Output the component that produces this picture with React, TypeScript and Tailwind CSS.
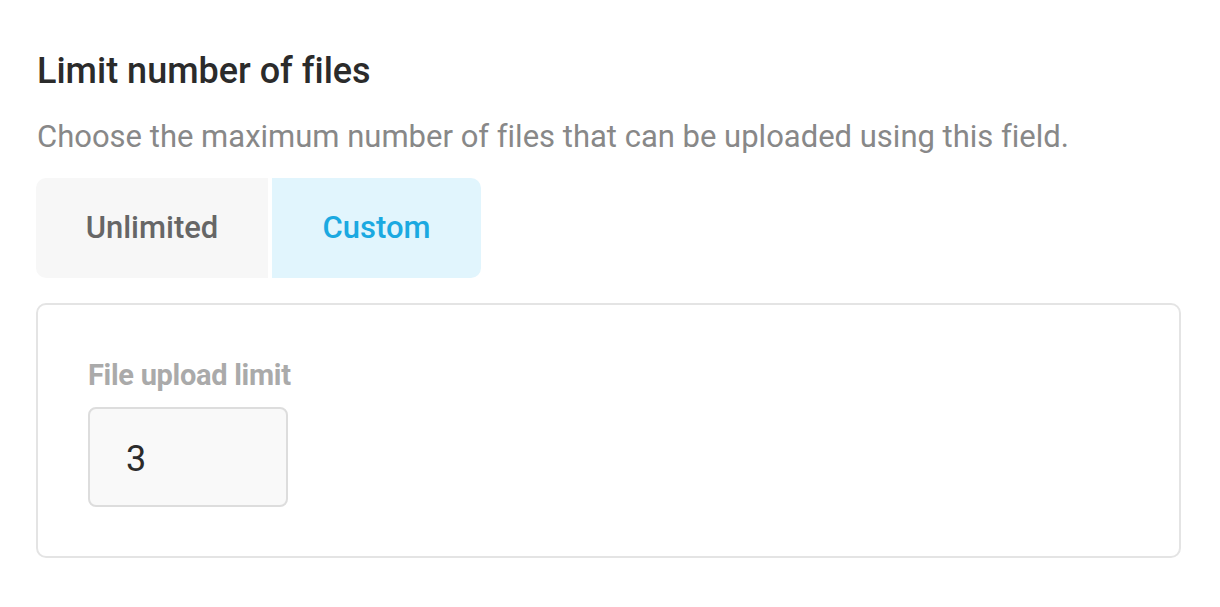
import { useState } from 'react'

const App = () => {
  const [mode, setMode] = useState<'unlimited' | 'custom'>('custom')
  const [limit, setLimit] = useState('3')

  return (
    <div className="min-h-screen bg-white pt-[49px] px-[36px] font-['Roboto','Liberation_Sans',sans-serif] [font-variant-ligatures:none]">
      <h2 className="text-[36px] leading-[44px] font-medium text-[#2b2b2b] pl-px">Limit number of files</h2>
      <p className="mt-[24px] text-[31px] leading-[40px] text-[#888888] pl-px">
        Choose the maximum number of files that can be uploaded using this field.
      </p>

      {/* segmented control */}
      <div className="mt-[21px] flex gap-[4px] w-[445px] h-[100px] rounded-[10px] overflow-hidden">
        <button
          onClick={() => setMode('unlimited')}
          className={`w-[232px] text-[31px] font-medium ${
            mode === 'unlimited' ? 'bg-[#e1f5fd] text-[#1ba9e1]' : 'bg-[#f7f7f7] text-[#666666]'
          }`}
        >
          Unlimited
        </button>
        <button
          onClick={() => setMode('custom')}
          className={`flex-1 text-[31px] font-medium ${
            mode === 'custom' ? 'bg-[#e1f5fd] text-[#1ba9e1]' : 'bg-[#f7f7f7] text-[#666666]'
          }`}
        >
          Custom
        </button>
      </div>

      {/* custom limit */}
      <div className="mt-[25px] w-[1145px] h-[255px] border-2 border-[#e4e4e4] rounded-[10px] px-[50px] pt-[53px]">
        <label className="block text-[29px] leading-[34px] font-bold text-[#aaaaaa] tracking-[-0.3px]">File upload limit</label>
        <input
          value={limit}
          onChange={(e) => setLimit(e.target.value)}
          className="mt-[15px] w-[200px] h-[100px] bg-[#f9f9f9] border-2 border-[#dddddd] rounded-[8px] pl-[36px] pt-[4px] text-[36px] text-[#2b2b2b] focus:outline-none"
        />
      </div>
    </div>
  )
}

export default App
